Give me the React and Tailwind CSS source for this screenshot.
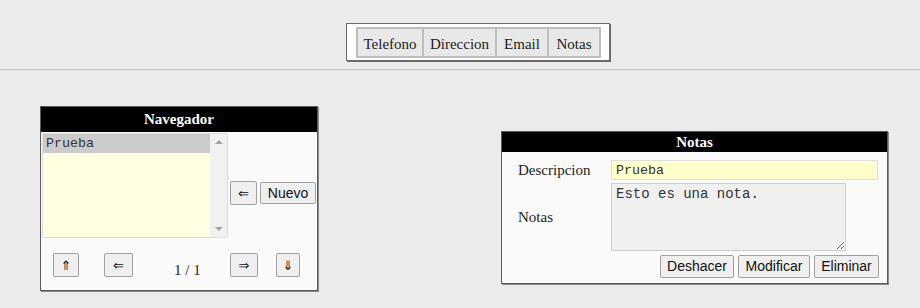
import React from "react";

const serif = "font-['Liberation_Serif',serif]";
const mono = "font-['Liberation_Mono',monospace]";
const sans = "font-['Liberation_Sans',Arial,sans-serif]";

function ArrowBtn({ children, w }) {
  return (
    <button
      className={`h-[24px] ${w} flex items-center justify-center bg-[#efefef] border border-[#a0a0a0] rounded-[2px] text-[13px] text-[#111] font-['DejaVu_Sans',sans-serif] leading-none`}
    >
      {children}
    </button>
  );
}

export default function App() {
  return (
    <div className="w-[920px] h-[308px] bg-[#ebebeb] overflow-hidden">
      {/* Tabs */}
      <div className="pt-[23px] pl-[346px]">
        <div className="w-[264px] h-[38px] bg-white border border-[#6a6a6a] shadow-[1px_1px_0_#6a6a6a] pl-[9px] pt-[3px] flex items-start">
          {[
            ["Telefono", "w-[68px] border-l-2"],
            ["Direccion", "w-[73px]"],
            ["Email", "w-[52px]"],
            ["Notas", "w-[52px]"],
          ].map(([t, c]) => (
            <div
              key={t}
              className={`${c} h-[31px] bg-[#e8e8e8] border-y-2 border-r-2 border-[#bdbdbd] flex items-center justify-center pt-[3px] text-[15px] text-[#222] ${serif}`}
            >
              {t}
            </div>
          ))}
        </div>
      </div>
      <div className="mt-[8px] border-t border-[#c2c2c2]" />

      <div className="flex items-start pl-[40px] pt-[36px]">
        {/* Navegador */}
        <div className="w-[278px] h-[185px] bg-[#fafafa] border border-[#5a5a5a] shadow-[1px_1px_0_#8a8a8a] flex flex-col">
          <div className={`h-[25px] bg-black text-white font-bold text-[15px] flex items-center justify-center ${serif}`}>
            Navegador
          </div>
          <div className="flex items-start pl-[1px] pt-[1px]">
            <div className="w-[186px] h-[105px] bg-[#fffee0] border border-[#dcdcdc] rounded-[2px] flex">
              <div className="flex-1">
                <div className={`h-[19px] bg-[#cbcbcb] pl-[3px] text-[13.33px] text-[#333] leading-[19px] ${mono}`}>
                  Prueba
                </div>
              </div>
              <div className="w-[17px] bg-[#f1f1f1] flex flex-col items-center justify-between py-[6px]">
                <div className="w-0 h-0 border-l-[4px] border-r-[4px] border-b-[4px] border-l-transparent border-r-transparent border-b-[#a3a3a3]" />
                <div className="w-0 h-0 border-l-[4px] border-r-[4px] border-t-[4px] border-l-transparent border-r-transparent border-t-[#a3a3a3]" />
              </div>
            </div>
            <div className="flex items-center gap-[3px] ml-[2px] mt-[48px]">
              <ArrowBtn w="w-[27px] h-[22px]">⇐</ArrowBtn>
              <button className={`w-[56px] h-[22px] bg-[#efefef] border border-[#a0a0a0] rounded-[2px] text-[14px] text-[#111] ${sans}`}>
                Nuevo
              </button>
            </div>
          </div>
          <div className="flex items-start pl-[12px] mt-[15px]">
            <ArrowBtn w="w-[26px]">⇑</ArrowBtn>
            <div className="ml-[25px]">
              <ArrowBtn w="w-[29px]">⇐</ArrowBtn>
            </div>
            <div className={`w-[97px] pl-[41px] pt-[8px] text-[15px] text-[#222] leading-[18px] ${serif}`}>
              1 / 1
            </div>
            <ArrowBtn w="w-[28px]">⇒</ArrowBtn>
            <div className="ml-[18px]">
              <ArrowBtn w="w-[24px]">⇓</ArrowBtn>
            </div>
          </div>
        </div>

        {/* Notas */}
        <div className="ml-[183px] mt-[25px] w-[387px] h-[153px] bg-[#fafafa] border border-[#5a5a5a] shadow-[1px_1px_0_#8a8a8a] flex flex-col">
          <div className={`h-[20px] bg-black text-white font-bold text-[15px] flex items-center justify-center ${serif}`}>
            Notas
          </div>
          <div className="flex items-center h-[20px] mt-[8px]">
            <div className={`w-[109px] pl-[16px] text-[15px] leading-[20px] text-[#222] ${serif}`}>Descripcion</div>
            <input
              readOnly
              value="Prueba"
              className={`w-[267px] h-[20px] bg-[#ffffcc] border border-[#dddddd] px-[4px] text-[13.33px] text-[#333] outline-none ${mono}`}
            />
          </div>
          <div className="flex items-center h-[68px] mt-[3px]">
            <div className={`w-[109px] pl-[16px] text-[15px] leading-[20px] text-[#222] ${serif}`}>Notas</div>
            <textarea
              readOnly
              value="Esto es una nota."
              className={`block w-[235px] h-[68px] bg-[#f0f0f0] border border-[#cfcfcf] px-[4px] py-[2px] text-[14px] leading-[17px] text-[#333] outline-none ${mono}`}
            />
          </div>
          <div className={`flex justify-end gap-[4px] pr-[8px] mt-[4px] ${sans}`}>
            {[
              ["Deshacer", "w-[74px]"],
              ["Modificar", "w-[72px]"],
              ["Eliminar", "w-[65px]"],
            ].map(([t, w]) => (
              <button
                key={t}
                className={`${w} h-[23px] bg-[#efefef] border border-[#a0a0a0] rounded-[2px] text-[14px] text-[#111]`}
              >
                {t}
              </button>
            ))}
          </div>
        </div>
      </div>
    </div>
  );
}
